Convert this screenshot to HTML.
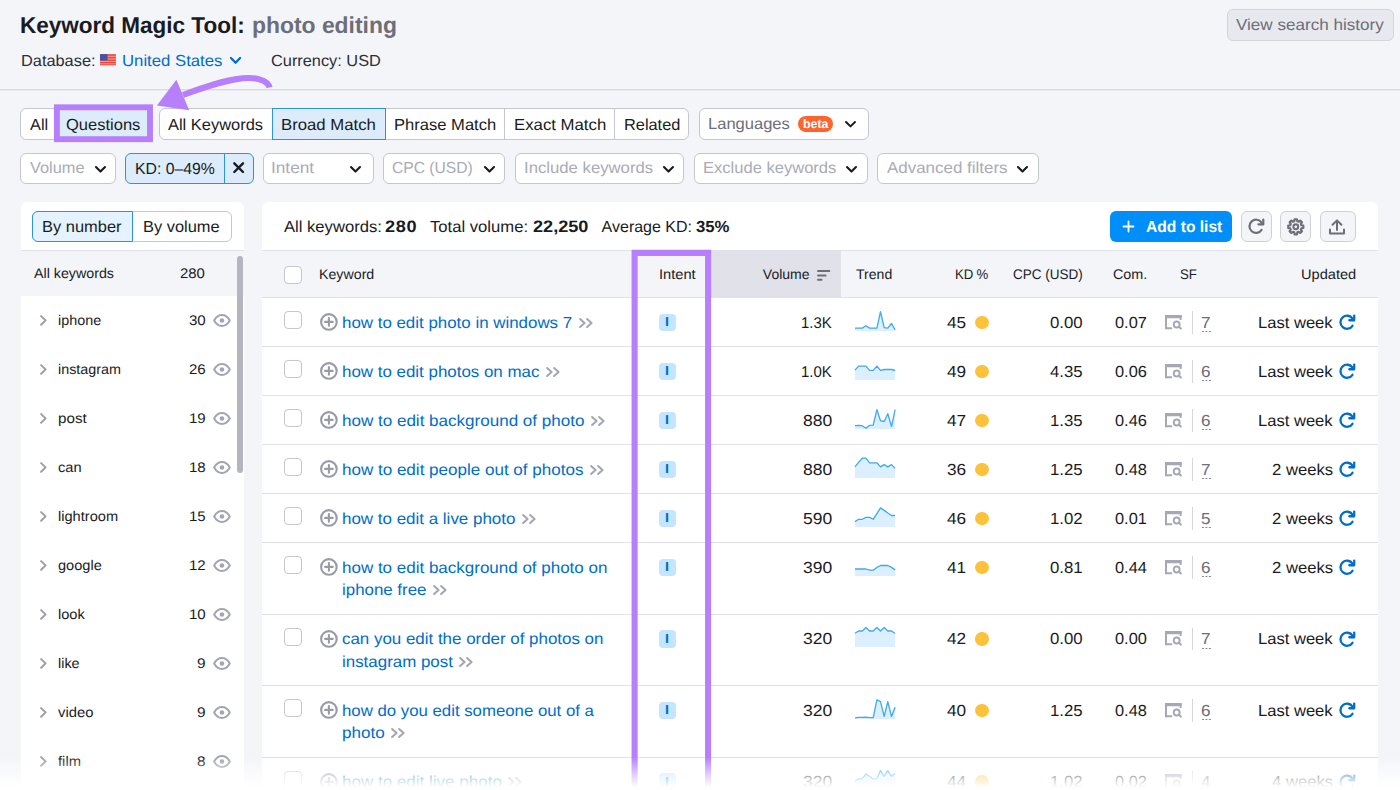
<!DOCTYPE html>
<html lang="en">
<head>
<meta charset="utf-8">
<title>Keyword Magic Tool: photo editing</title>
<style>

*{box-sizing:border-box;margin:0;padding:0}
html,body{width:1400px;height:790px;overflow:hidden;background:#f4f5f9}
body{font-family:"Liberation Sans",sans-serif;color:#191b23;text-rendering:geometricPrecision}
#app{position:relative;width:1400px;height:790px;overflow:hidden;background:#f4f5f9}
.b{position:absolute}
.t{position:absolute;white-space:nowrap;line-height:1;transform-origin:0 0}
svg{position:absolute;overflow:visible}
.pill{background:#fff;border:1px solid #c4c7cf;border-radius:6px}
.panel{background:#fff;border-radius:6px}

</style>
</head>
<body>
<div id="app">
<header>
<span class="t" style="left:20.13px;top:14.00px;font-size:23px;color:#191b23;letter-spacing:0.000px;font-weight:700;transform:scaleX(0.9787);">Keyword Magic Tool:</span>
<span class="t" style="left:251.74px;top:14.00px;font-size:23px;color:#6c6e79;letter-spacing:0.000px;font-weight:700;transform:scaleX(0.9949);">photo editing</span>
<div class="b " style="left:1227px;top:9px;width:167px;height:32px;background:#e8e9ee;border:1px solid #d3d5dc;border-radius:6px"></div>
<span class="t" style="left:1236.12px;top:18.00px;font-size:16px;color:#6c6e79;letter-spacing:0.000px;transform:scaleX(1.0671);">View search history</span>
<span class="t" style="left:20.52px;top:54.00px;font-size:16px;color:#2b2e38;letter-spacing:0.000px;transform:scaleX(1.0217);">Database:</span>
<svg style="left:100.2px;top:54.1px" width="15.9" height="11.5" viewBox="0 0 15.6 11"><rect width="15.6" height="11" fill="#e8473f"/><rect y="1.6" width="15.6" height="1.1" fill="#f59a8c"/><rect y="4.1" width="15.6" height="1.1" fill="#f59a8c"/><rect y="6.6" width="15.6" height="1.1" fill="#f59a8c"/><rect y="9" width="15.6" height="1" fill="#f59a8c"/><rect width="7.4" height="6.2" fill="#4453a5"/></svg>
<span class="t" style="left:122.02px;top:54.00px;font-size:16px;color:#006dca;letter-spacing:0.000px;transform:scaleX(1.0454);">United States</span>
<svg style="left:230px;top:56.5px" width="11.1" height="6.9" viewBox="0 0 11.1 6.9"><path d="M1 1 L5.55 5.7 L10.1 1" fill="none" stroke="#006dca" stroke-width="2.3" stroke-linecap="round" stroke-linejoin="round"/></svg>
<span class="t" style="left:270.62px;top:54.00px;font-size:16px;color:#2b2e38;letter-spacing:0.000px;transform:scaleX(1.0208);">Currency: USD</span>
<div class="b " style="left:0px;top:89px;width:1400px;height:2px;background:linear-gradient(to bottom,#dadce3 0,#dadce3 50%,#e9eaf0 50%,#e9eaf0 100%)"></div>
</header>
<nav>
<div class="b pill" style="left:20.4px;top:108px;width:132px;height:32px;"></div>
<span class="t" style="left:29.82px;top:118.00px;font-size:16px;color:#191b23;letter-spacing:0.000px;transform:scaleX(1.0191);">All</span>
<div class="b " style="left:58px;top:108px;width:91px;height:32px;background:#dcecfb"></div>
<svg style="left:0;top:0" width="200" height="160" viewBox="0 0 200 160"><rect x="56.9" y="107.3" width="93.1" height="31.9" fill="none" stroke="#b77ffb" stroke-width="5.9"/></svg>
<span class="t" style="left:66.12px;top:118.00px;font-size:16px;color:#191b23;letter-spacing:0.000px;transform:scaleX(1.0316);">Questions</span>
<div class="b pill" style="left:159.3px;top:108px;width:530px;height:32px;"></div>
<span class="t" style="left:168.42px;top:118.00px;font-size:16px;color:#191b23;letter-spacing:0.000px;transform:scaleX(1.0274);">All Keywords</span>
<div class="b " style="left:272.3px;top:108px;width:113.4px;height:32px;background:#dcecfb;border:1px solid #2b94e1"></div>
<span class="t" style="left:281.12px;top:118.00px;font-size:16px;color:#191b23;letter-spacing:0.000px;transform:scaleX(1.0452);">Broad Match</span>
<span class="t" style="left:393.72px;top:118.00px;font-size:16px;color:#191b23;letter-spacing:0.000px;transform:scaleX(1.0355);">Phrase Match</span>
<div class="b " style="left:504px;top:109px;width:1px;height:30px;background:#c4c7cf"></div>
<span class="t" style="left:513.92px;top:118.00px;font-size:16px;color:#191b23;letter-spacing:0.000px;transform:scaleX(1.0476);">Exact Match</span>
<div class="b " style="left:614px;top:109px;width:1px;height:30px;background:#c4c7cf"></div>
<span class="t" style="left:623.62px;top:118.00px;font-size:16px;color:#191b23;letter-spacing:0.000px;transform:scaleX(1.0211);">Related</span>
<div class="b pill" style="left:698.6px;top:108px;width:170px;height:32px;"></div>
<span class="t" style="left:707.62px;top:117.00px;font-size:16px;color:#6c6e79;letter-spacing:0.000px;transform:scaleX(1.0332);">Languages</span>
<div class="b " style="left:798.2px;top:116.1px;width:34.5px;height:15.7px;background:#ff642d;border-radius:8px"></div>
<span class="t" style="left:802.51px;top:118.00px;font-size:12.5px;color:#fff;letter-spacing:0.000px;font-weight:700;transform:scaleX(0.9894);">beta</span>
<svg style="left:845px;top:121px" width="11" height="6.6" viewBox="0 0 11 6.6"><path d="M1 1 L5.5 5.3999999999999995 L10 1" fill="none" stroke="#191b23" stroke-width="2" stroke-linecap="round" stroke-linejoin="round"/></svg>
</nav>
<section>
<div class="b pill" style="left:20.4px;top:153px;width:95.9px;height:31px;"></div>
<span class="t" style="left:29.82px;top:161.00px;font-size:16px;color:#a9abb6;letter-spacing:0.000px;transform:scaleX(1.0233);">Volume</span>
<svg style="left:94.6px;top:166px" width="11" height="6.8" viewBox="0 0 11 6.8"><path d="M1 1 L5.5 5.6 L10 1" fill="none" stroke="#191b23" stroke-width="2.1" stroke-linecap="round" stroke-linejoin="round"/></svg>
<div class="b " style="left:125px;top:153px;width:128.5px;height:31px;background:#dcecfb;border:1px solid #2b94e1;border-radius:6px"></div>
<div class="b " style="left:224px;top:154px;width:1px;height:29px;background:#2b94e1"></div>
<span class="t" style="left:134.82px;top:162.00px;font-size:16px;color:#191b23;letter-spacing:0.000px;transform:scaleX(0.9874);">KD: 0–49%</span>
<svg style="left:233px;top:162.4px" width="11.3" height="11.3" viewBox="0 0 11.3 11.3"><path d="M1.3 1.3 L10 10 M10 1.3 L1.3 10" stroke="#191b23" stroke-width="2.4" stroke-linecap="round"/></svg>
<div class="b pill" style="left:262.5px;top:153px;width:111.10000000000002px;height:31px;"></div>
<span class="t" style="left:271.12px;top:161.00px;font-size:16px;color:#a9abb6;letter-spacing:0.000px;transform:scaleX(1.0759);">Intent</span>
<svg style="left:350px;top:166px" width="11" height="6.8" viewBox="0 0 11 6.8"><path d="M1 1 L5.5 5.6 L10 1" fill="none" stroke="#191b23" stroke-width="2.1" stroke-linecap="round" stroke-linejoin="round"/></svg>
<div class="b pill" style="left:383.4px;top:153px;width:122.10000000000002px;height:31px;"></div>
<span class="t" style="left:392.02px;top:161.00px;font-size:16px;color:#a9abb6;letter-spacing:0.000px;transform:scaleX(0.9764);">CPC (USD)</span>
<svg style="left:484px;top:166px" width="11" height="6.8" viewBox="0 0 11 6.8"><path d="M1 1 L5.5 5.6 L10 1" fill="none" stroke="#191b23" stroke-width="2.1" stroke-linecap="round" stroke-linejoin="round"/></svg>
<div class="b pill" style="left:515.2px;top:153px;width:169.29999999999995px;height:31px;"></div>
<span class="t" style="left:523.62px;top:161.00px;font-size:16px;color:#a9abb6;letter-spacing:0.000px;transform:scaleX(1.0444);">Include keywords</span>
<svg style="left:663px;top:166px" width="11" height="6.8" viewBox="0 0 11 6.8"><path d="M1 1 L5.5 5.6 L10 1" fill="none" stroke="#191b23" stroke-width="2.1" stroke-linecap="round" stroke-linejoin="round"/></svg>
<div class="b pill" style="left:694.3px;top:153px;width:173.30000000000007px;height:31px;"></div>
<span class="t" style="left:703.12px;top:161.00px;font-size:16px;color:#a9abb6;letter-spacing:0.000px;transform:scaleX(1.0339);">Exclude keywords</span>
<svg style="left:846.4px;top:166px" width="11" height="6.8" viewBox="0 0 11 6.8"><path d="M1 1 L5.5 5.6 L10 1" fill="none" stroke="#191b23" stroke-width="2.1" stroke-linecap="round" stroke-linejoin="round"/></svg>
<div class="b pill" style="left:877.3px;top:153px;width:162.0px;height:31px;"></div>
<span class="t" style="left:886.92px;top:161.00px;font-size:16px;color:#a9abb6;letter-spacing:0.000px;transform:scaleX(1.0586);">Advanced filters</span>
<svg style="left:1017px;top:166px" width="11" height="6.8" viewBox="0 0 11 6.8"><path d="M1 1 L5.5 5.6 L10 1" fill="none" stroke="#191b23" stroke-width="2.1" stroke-linecap="round" stroke-linejoin="round"/></svg>
</section>
<svg style="left:0;top:0" width="1400" height="160" viewBox="0 0 1400 160"><path d="M269.5 87.5 C268 80 255 77 243 78.3 C225 80 205 87 183 95" fill="none" stroke="#b77ffb" stroke-width="6.1"/><path d="M156.9 105.6 L176.4 79.8 L189.2 110.2 Z" fill="#b77ffb"/></svg>
<aside>
<div class="b panel" style="left:20.5px;top:201.8px;width:223.4px;height:600px;"></div>
<div class="b pill" style="left:32.3px;top:211px;width:199.3px;height:30.6px;"></div>
<div class="b " style="left:32.3px;top:211px;width:100.7px;height:30.6px;background:#e4f3ff;border:1px solid #2b94e1;border-radius:6px 0 0 6px"></div>
<span class="t" style="left:42.42px;top:220.00px;font-size:16px;color:#191b23;letter-spacing:0.000px;transform:scaleX(1.0277);">By number</span>
<span class="t" style="left:143.42px;top:220.00px;font-size:16px;color:#191b23;letter-spacing:0.000px;transform:scaleX(1.0257);">By volume</span>
<div class="b " style="left:20.5px;top:250px;width:223.4px;height:1px;background:#e0e1e9"></div>
<div class="b " style="left:20.5px;top:251px;width:223.4px;height:44.5px;background:#f4f5f9"></div>
<span class="t" style="left:34.33px;top:266.00px;font-size:14px;color:#191b23;letter-spacing:0.000px;transform:scaleX(1.0173);">All keywords</span>
<span class="t" style="left:180.13px;top:266.00px;font-size:14px;color:#191b23;letter-spacing:-0.000px;transform:scaleX(1.0640);">280</span>
<div class="b " style="left:236.7px;top:255.5px;width:6.3px;height:217px;background:#b4b5bd;border-radius:3.2px"></div>
<div role="listitem">
<svg style="left:40.2px;top:314.9px" width="6.9" height="10.8" viewBox="0 0 6.9 10.8"><path d="M1.1 1.1 L5.6 5.4 L1.1 9.7" fill="none" stroke="#9b9eab" stroke-width="2" stroke-linecap="round" stroke-linejoin="round"/></svg>
<span class="t" style="left:58.03px;top:313.00px;font-size:14px;color:#191b23;letter-spacing:0.000px;transform:scaleX(1.0264);">iphone</span>
<span class="t" style="left:189.03px;top:313.00px;font-size:14px;color:#191b23;letter-spacing:-0.000px;transform:scaleX(1.0755);">30</span>
<svg style="left:213.1px;top:313.6px" width="17.9" height="13.1" viewBox="0 0 17.9 13.1"><path d="M1.1 6.55 C3.2 2.9 5.9 1.1 8.95 1.1 C12 1.1 14.7 2.9 16.8 6.55 C14.7 10.2 12 12 8.95 12 C5.9 12 3.2 10.2 1.1 6.55 Z" fill="none" stroke="#a3a6b2" stroke-width="2" stroke-linejoin="round"/><circle cx="8.95" cy="6.55" r="2.3" fill="#a3a6b2"/></svg>
</div>
<div role="listitem">
<svg style="left:40.2px;top:363.9px" width="6.9" height="10.8" viewBox="0 0 6.9 10.8"><path d="M1.1 1.1 L5.6 5.4 L1.1 9.7" fill="none" stroke="#9b9eab" stroke-width="2" stroke-linecap="round" stroke-linejoin="round"/></svg>
<span class="t" style="left:58.03px;top:362.00px;font-size:14px;color:#191b23;letter-spacing:0.000px;transform:scaleX(1.0258);">instagram</span>
<span class="t" style="left:189.03px;top:362.00px;font-size:14px;color:#191b23;letter-spacing:-0.000px;transform:scaleX(1.0755);">26</span>
<svg style="left:213.1px;top:362.6px" width="17.9" height="13.1" viewBox="0 0 17.9 13.1"><path d="M1.1 6.55 C3.2 2.9 5.9 1.1 8.95 1.1 C12 1.1 14.7 2.9 16.8 6.55 C14.7 10.2 12 12 8.95 12 C5.9 12 3.2 10.2 1.1 6.55 Z" fill="none" stroke="#a3a6b2" stroke-width="2" stroke-linejoin="round"/><circle cx="8.95" cy="6.55" r="2.3" fill="#a3a6b2"/></svg>
</div>
<div role="listitem">
<svg style="left:40.2px;top:412.9px" width="6.9" height="10.8" viewBox="0 0 6.9 10.8"><path d="M1.1 1.1 L5.6 5.4 L1.1 9.7" fill="none" stroke="#9b9eab" stroke-width="2" stroke-linecap="round" stroke-linejoin="round"/></svg>
<span class="t" style="left:58.03px;top:411.00px;font-size:14px;color:#191b23;letter-spacing:0.000px;transform:scaleX(1.0864);">post</span>
<span class="t" style="left:189.03px;top:411.00px;font-size:14px;color:#191b23;letter-spacing:-0.000px;transform:scaleX(1.0755);">19</span>
<svg style="left:213.1px;top:411.6px" width="17.9" height="13.1" viewBox="0 0 17.9 13.1"><path d="M1.1 6.55 C3.2 2.9 5.9 1.1 8.95 1.1 C12 1.1 14.7 2.9 16.8 6.55 C14.7 10.2 12 12 8.95 12 C5.9 12 3.2 10.2 1.1 6.55 Z" fill="none" stroke="#a3a6b2" stroke-width="2" stroke-linejoin="round"/><circle cx="8.95" cy="6.55" r="2.3" fill="#a3a6b2"/></svg>
</div>
<div role="listitem">
<svg style="left:40.2px;top:461.9px" width="6.9" height="10.8" viewBox="0 0 6.9 10.8"><path d="M1.1 1.1 L5.6 5.4 L1.1 9.7" fill="none" stroke="#9b9eab" stroke-width="2" stroke-linecap="round" stroke-linejoin="round"/></svg>
<span class="t" style="left:58.03px;top:460.00px;font-size:14px;color:#191b23;letter-spacing:0.000px;transform:scaleX(1.0433);">can</span>
<span class="t" style="left:189.03px;top:460.00px;font-size:14px;color:#191b23;letter-spacing:-0.000px;transform:scaleX(1.0755);">18</span>
<svg style="left:213.1px;top:460.6px" width="17.9" height="13.1" viewBox="0 0 17.9 13.1"><path d="M1.1 6.55 C3.2 2.9 5.9 1.1 8.95 1.1 C12 1.1 14.7 2.9 16.8 6.55 C14.7 10.2 12 12 8.95 12 C5.9 12 3.2 10.2 1.1 6.55 Z" fill="none" stroke="#a3a6b2" stroke-width="2" stroke-linejoin="round"/><circle cx="8.95" cy="6.55" r="2.3" fill="#a3a6b2"/></svg>
</div>
<div role="listitem">
<svg style="left:40.2px;top:510.9px" width="6.9" height="10.8" viewBox="0 0 6.9 10.8"><path d="M1.1 1.1 L5.6 5.4 L1.1 9.7" fill="none" stroke="#9b9eab" stroke-width="2" stroke-linecap="round" stroke-linejoin="round"/></svg>
<span class="t" style="left:58.03px;top:509.00px;font-size:14px;color:#191b23;letter-spacing:0.000px;transform:scaleX(1.0427);">lightroom</span>
<span class="t" style="left:189.03px;top:509.00px;font-size:14px;color:#191b23;letter-spacing:-0.000px;transform:scaleX(1.0755);">15</span>
<svg style="left:213.1px;top:509.6px" width="17.9" height="13.1" viewBox="0 0 17.9 13.1"><path d="M1.1 6.55 C3.2 2.9 5.9 1.1 8.95 1.1 C12 1.1 14.7 2.9 16.8 6.55 C14.7 10.2 12 12 8.95 12 C5.9 12 3.2 10.2 1.1 6.55 Z" fill="none" stroke="#a3a6b2" stroke-width="2" stroke-linejoin="round"/><circle cx="8.95" cy="6.55" r="2.3" fill="#a3a6b2"/></svg>
</div>
<div role="listitem">
<svg style="left:40.2px;top:559.9px" width="6.9" height="10.8" viewBox="0 0 6.9 10.8"><path d="M1.1 1.1 L5.6 5.4 L1.1 9.7" fill="none" stroke="#9b9eab" stroke-width="2" stroke-linecap="round" stroke-linejoin="round"/></svg>
<span class="t" style="left:58.03px;top:558.00px;font-size:14px;color:#191b23;letter-spacing:0.000px;transform:scaleX(1.0430);">google</span>
<span class="t" style="left:189.03px;top:558.00px;font-size:14px;color:#191b23;letter-spacing:-0.000px;transform:scaleX(1.0755);">12</span>
<svg style="left:213.1px;top:558.6px" width="17.9" height="13.1" viewBox="0 0 17.9 13.1"><path d="M1.1 6.55 C3.2 2.9 5.9 1.1 8.95 1.1 C12 1.1 14.7 2.9 16.8 6.55 C14.7 10.2 12 12 8.95 12 C5.9 12 3.2 10.2 1.1 6.55 Z" fill="none" stroke="#a3a6b2" stroke-width="2" stroke-linejoin="round"/><circle cx="8.95" cy="6.55" r="2.3" fill="#a3a6b2"/></svg>
</div>
<div role="listitem">
<svg style="left:40.2px;top:608.9px" width="6.9" height="10.8" viewBox="0 0 6.9 10.8"><path d="M1.1 1.1 L5.6 5.4 L1.1 9.7" fill="none" stroke="#9b9eab" stroke-width="2" stroke-linecap="round" stroke-linejoin="round"/></svg>
<span class="t" style="left:58.03px;top:607.00px;font-size:14px;color:#191b23;letter-spacing:-0.000px;transform:scaleX(1.0416);">look</span>
<span class="t" style="left:189.03px;top:607.00px;font-size:14px;color:#191b23;letter-spacing:-0.000px;transform:scaleX(1.0755);">10</span>
<svg style="left:213.1px;top:607.6px" width="17.9" height="13.1" viewBox="0 0 17.9 13.1"><path d="M1.1 6.55 C3.2 2.9 5.9 1.1 8.95 1.1 C12 1.1 14.7 2.9 16.8 6.55 C14.7 10.2 12 12 8.95 12 C5.9 12 3.2 10.2 1.1 6.55 Z" fill="none" stroke="#a3a6b2" stroke-width="2" stroke-linejoin="round"/><circle cx="8.95" cy="6.55" r="2.3" fill="#a3a6b2"/></svg>
</div>
<div role="listitem">
<svg style="left:40.2px;top:657.9px" width="6.9" height="10.8" viewBox="0 0 6.9 10.8"><path d="M1.1 1.1 L5.6 5.4 L1.1 9.7" fill="none" stroke="#9b9eab" stroke-width="2" stroke-linecap="round" stroke-linejoin="round"/></svg>
<span class="t" style="left:58.03px;top:656.00px;font-size:14px;color:#191b23;letter-spacing:0.000px;transform:scaleX(1.0257);">like</span>
<span class="t" style="left:196.83px;top:656.00px;font-size:14px;color:#191b23;letter-spacing:0.344px;transform:scaleX(1.1000);">9</span>
<svg style="left:213.1px;top:656.6px" width="17.9" height="13.1" viewBox="0 0 17.9 13.1"><path d="M1.1 6.55 C3.2 2.9 5.9 1.1 8.95 1.1 C12 1.1 14.7 2.9 16.8 6.55 C14.7 10.2 12 12 8.95 12 C5.9 12 3.2 10.2 1.1 6.55 Z" fill="none" stroke="#a3a6b2" stroke-width="2" stroke-linejoin="round"/><circle cx="8.95" cy="6.55" r="2.3" fill="#a3a6b2"/></svg>
</div>
<div role="listitem">
<svg style="left:40.2px;top:706.9px" width="6.9" height="10.8" viewBox="0 0 6.9 10.8"><path d="M1.1 1.1 L5.6 5.4 L1.1 9.7" fill="none" stroke="#9b9eab" stroke-width="2" stroke-linecap="round" stroke-linejoin="round"/></svg>
<span class="t" style="left:58.03px;top:705.00px;font-size:14px;color:#191b23;letter-spacing:0.000px;transform:scaleX(1.0564);">video</span>
<span class="t" style="left:196.83px;top:705.00px;font-size:14px;color:#191b23;letter-spacing:0.344px;transform:scaleX(1.1000);">9</span>
<svg style="left:213.1px;top:705.6px" width="17.9" height="13.1" viewBox="0 0 17.9 13.1"><path d="M1.1 6.55 C3.2 2.9 5.9 1.1 8.95 1.1 C12 1.1 14.7 2.9 16.8 6.55 C14.7 10.2 12 12 8.95 12 C5.9 12 3.2 10.2 1.1 6.55 Z" fill="none" stroke="#a3a6b2" stroke-width="2" stroke-linejoin="round"/><circle cx="8.95" cy="6.55" r="2.3" fill="#a3a6b2"/></svg>
</div>
<div role="listitem">
<svg style="left:40.2px;top:755.9px" width="6.9" height="10.8" viewBox="0 0 6.9 10.8"><path d="M1.1 1.1 L5.6 5.4 L1.1 9.7" fill="none" stroke="#9b9eab" stroke-width="2" stroke-linecap="round" stroke-linejoin="round"/></svg>
<span class="t" style="left:58.03px;top:754.00px;font-size:14px;color:#191b23;letter-spacing:0.000px;transform:scaleX(1.0539);">film</span>
<span class="t" style="left:196.83px;top:754.00px;font-size:14px;color:#191b23;letter-spacing:0.344px;transform:scaleX(1.1000);">8</span>
<svg style="left:213.1px;top:754.6px" width="17.9" height="13.1" viewBox="0 0 17.9 13.1"><path d="M1.1 6.55 C3.2 2.9 5.9 1.1 8.95 1.1 C12 1.1 14.7 2.9 16.8 6.55 C14.7 10.2 12 12 8.95 12 C5.9 12 3.2 10.2 1.1 6.55 Z" fill="none" stroke="#a3a6b2" stroke-width="2" stroke-linejoin="round"/><circle cx="8.95" cy="6.55" r="2.3" fill="#a3a6b2"/></svg>
</div>
</aside>
<main>
<div class="b panel" style="left:261.8px;top:201.8px;width:1116.4px;height:600px;"></div>
<span class="t" style="left:283.62px;top:220.00px;font-size:16px;color:#191b23;letter-spacing:0.000px;transform:scaleX(1.0379);">All keywords:</span>
<span class="t" style="left:385.39px;top:219.00px;font-size:16.5px;color:#191b23;letter-spacing:0.580px;font-weight:700;transform:scaleX(1.1000);">280</span>
<span class="t" style="left:430.42px;top:220.00px;font-size:16px;color:#191b23;letter-spacing:0.000px;transform:scaleX(1.0398);">Total volume:</span>
<span class="t" style="left:532.69px;top:219.00px;font-size:16.5px;color:#191b23;letter-spacing:0.000px;font-weight:700;transform:scaleX(1.0989);">22,250</span>
<span class="t" style="left:601.62px;top:220.00px;font-size:16px;color:#191b23;letter-spacing:-0.000px;">Average KD:</span>
<span class="t" style="left:695.92px;top:220.00px;font-size:16px;color:#191b23;letter-spacing:0.000px;font-weight:700;transform:scaleX(1.0465);">35%</span>
<div class="b " style="left:1110px;top:211px;width:122px;height:30.8px;background:#008ff8;border-radius:6px"></div>
<svg style="left:1123px;top:221px" width="11" height="11" viewBox="0 0 11 11"><path d="M5.5 0.5 V10.5 M0.5 5.5 H10.5" stroke="#fff" stroke-width="1.8" stroke-linecap="round"/></svg>
<span class="t" style="left:1146.12px;top:220.00px;font-size:16px;color:#fff;letter-spacing:0.000px;font-weight:700;transform:scaleX(0.9757);">Add to list</span>
<div class="b " style="left:1241px;top:211px;width:30.6px;height:30.8px;background:#f4f5f9;border:1px solid #cfd1d9;border-radius:6px"></div>
<div class="b " style="left:1280.4px;top:211px;width:30.4px;height:30.8px;background:#f4f5f9;border:1px solid #cfd1d9;border-radius:6px"></div>
<div class="b " style="left:1320px;top:211px;width:35.6px;height:30.8px;background:#f4f5f9;border:1px solid #cfd1d9;border-radius:6px"></div>
<svg style="left:1248px;top:218.2px" width="16.4" height="16.4" viewBox="0 0 16.4 16.4"><path d="M13.6 11.9 A6.6 6.6 0 1 1 13.6 4.7 L14.6 6.1" fill="none" stroke="#6c6e79" stroke-width="2.2" stroke-linecap="round" stroke-linejoin="round"/><path d="M15.3 1.6 V6.3 H10.4" fill="none" stroke="#6c6e79" stroke-width="2.2" stroke-linecap="round" stroke-linejoin="round"/></svg>
<svg style="left:1286.8px;top:217.6px" width="17.6" height="17.6" viewBox="0 0 24 24"><path d="M10.34 1.73 L13.66 1.73 L14.11 4.39 L15.89 5.13 L18.09 3.57 L20.43 5.91 L18.87 8.11 L19.61 9.89 L22.27 10.34 L22.27 13.66 L19.61 14.11 L18.87 15.89 L20.43 18.09 L18.09 20.43 L15.89 18.87 L14.11 19.61 L13.66 22.27 L10.34 22.27 L9.89 19.61 L8.11 18.87 L5.91 20.43 L3.57 18.09 L5.13 15.89 L4.39 14.11 L1.73 13.66 L1.73 10.34 L4.39 9.89 L5.13 8.11 L3.57 5.91 L5.91 3.57 L8.11 5.13 L9.89 4.39 Z" fill="none" stroke="#6c6e79" stroke-width="3" stroke-linejoin="round"/><circle cx="12" cy="12" r="3.3" fill="none" stroke="#6c6e79" stroke-width="2.8"/></svg>
<svg style="left:1329px;top:218.6px" width="16" height="16" viewBox="0 0 16 16"><path d="M1 10.5 V14.6 H15 V10.5" fill="none" stroke="#6c6e79" stroke-width="2" stroke-linejoin="round" stroke-linecap="round"/><path d="M8 11 V2.4" stroke="#6c6e79" stroke-width="2" stroke-linecap="round"/><path d="M3.6 5.8 L8 1.4 L12.4 5.8" fill="none" stroke="#6c6e79" stroke-width="2" stroke-linecap="round" stroke-linejoin="round"/></svg>
<div class="b " style="left:261.8px;top:250px;width:1116.4px;height:1px;background:#e0e1e9"></div>
<div class="b " style="left:261.8px;top:251px;width:1116.4px;height:46px;background:#f4f5f9"></div>
<div class="b " style="left:711px;top:251px;width:130px;height:46px;background:#e0e1e9"></div>
<div class="b " style="left:261.8px;top:297px;width:1116.4px;height:1px;background:#e0e1e9"></div>
<div class="b " style="left:284.2px;top:266.3px;width:17.6px;height:18px;background:#fff;border:1px solid #c4c7cf;border-radius:4px"></div>
<span class="t" style="left:319.43px;top:267.00px;font-size:14px;color:#191b23;letter-spacing:0.000px;transform:scaleX(1.0144);">Keyword</span>
<span class="t" style="left:659.23px;top:267.00px;font-size:14px;color:#191b23;letter-spacing:0.000px;transform:scaleX(1.0464);">Intent</span>
<span class="t" style="left:762.83px;top:267.00px;font-size:14px;color:#191b23;letter-spacing:0.000px;">Volume</span>
<svg style="left:816.7px;top:269.7px" width="13.3" height="10.8" viewBox="0 0 13.3 10.8"><path d="M1 1 H12.3 M1 5.4 H8.6 M1 9.8 H4.6" stroke="#6c6e79" stroke-width="2" stroke-linecap="round"/></svg>
<span class="t" style="left:856.43px;top:267.00px;font-size:14px;color:#191b23;letter-spacing:0.000px;transform:scaleX(1.0053);">Trend</span>
<span class="t" style="left:954.83px;top:267.00px;font-size:14px;color:#191b23;letter-spacing:-0.140px;transform:scaleX(0.9400);">KD %</span>
<span class="t" style="left:1013.13px;top:267.00px;font-size:14px;color:#191b23;letter-spacing:0.000px;transform:scaleX(0.9656);">CPC (USD)</span>
<span class="t" style="left:1113.13px;top:267.00px;font-size:14px;color:#191b23;letter-spacing:0.000px;transform:scaleX(1.0240);">Com.</span>
<span class="t" style="left:1179.98px;top:267.00px;font-size:14px;color:#191b23;letter-spacing:0.000px;transform:scaleX(0.9449);">SF</span>
<span class="t" style="left:1300.53px;top:267.00px;font-size:14px;color:#191b23;letter-spacing:0.000px;transform:scaleX(1.0438);">Updated</span>
<div role="row">
<div class="b " style="left:284.2px;top:311.1px;width:17.6px;height:18px;background:#fff;border:1px solid #c4c7cf;border-radius:4px"></div>
<svg style="left:319.9px;top:313.0px" width="17.8" height="17.8" viewBox="0 0 17.8 17.8"><circle cx="8.9" cy="8.9" r="7.8" fill="none" stroke="#989aa6" stroke-width="2.1"/><path d="M8.9 5.1 V12.7 M5.1 8.9 H12.7" stroke="#989aa6" stroke-width="2.1" stroke-linecap="round"/></svg>
<span class="t" style="left:341.52px;top:316.00px;font-size:16px;color:#006dca;letter-spacing:0.000px;transform:scaleX(1.0560);">how to edit photo in windows 7</span>
<svg style="left:578.6px;top:317.6px" width="13.7" height="10" viewBox="0 0 13.7 10"><path d="M1.1 1 L5.6 5 L1.1 9 M8.1 1 L12.6 5 L8.1 9" fill="none" stroke="#a3a6b2" stroke-width="2" stroke-linecap="round" stroke-linejoin="round"/></svg>
<div class="b " style="left:658.5px;top:313.8px;width:17.5px;height:17.3px;background:#c4e5fe;border-radius:4px"></div>
<span class="t" style="left:664.68px;top:315.00px;font-size:13px;color:#006dca;letter-spacing:0.714px;font-weight:700;transform:scaleX(1.1000);">I</span>
<span class="t" style="left:801.15px;top:316.00px;font-size:15.5px;color:#191b23;letter-spacing:0.000px;transform:scaleX(0.9620);">1.3K</span>
<svg style="left:854.8px;top:297.5px" width="40.1" height="34" viewBox="0 0 40.1 34"><path d="M0.0 30.1 L3.6 30.1 L7.3 30.1 L10.9 27.8 L14.6 30.1 L18.2 30.1 L21.9 30.1 L25.5 13.6 L29.2 29.7 L32.8 30.1 L36.5 25.5 L40.1 31.9 L40.1 33 L0 33 Z" fill="#dbeffe"/><path d="M0.0 30.1 L3.6 30.1 L7.3 30.1 L10.9 27.8 L14.6 30.1 L18.2 30.1 L21.9 30.1 L25.5 13.6 L29.2 29.7 L32.8 30.1 L36.5 25.5 L40.1 31.9" fill="none" stroke="#3fa9f0" stroke-width="1.3" stroke-linejoin="round"/></svg>
<span class="t" style="left:946.62px;top:316.00px;font-size:16px;color:#191b23;letter-spacing:0.000px;transform:scaleX(1.0743);">45</span>
<div class="b " style="left:975.4px;top:315.7px;width:13.4px;height:13.4px;background:#fdc23c;border-radius:50%"></div>
<span class="t" style="left:1050.12px;top:316.00px;font-size:16px;color:#191b23;letter-spacing:0.000px;transform:scaleX(1.0475);">0.00</span>
<span class="t" style="left:1114.62px;top:316.00px;font-size:16px;color:#191b23;letter-spacing:0.000px;transform:scaleX(1.0218);">0.07</span>
<svg style="left:1165.2px;top:314.6px" width="16.8" height="14.4" viewBox="0 0 16.8 14.4"><g fill="#a6a8b5"><rect x="0" y="0" width="16.6" height="3.2" rx="0.6"/><rect x="0" y="0" width="2" height="14.2" rx="0.6"/><rect x="14.7" y="0" width="1.9" height="5"/><rect x="0" y="12.3" width="7.2" height="1.9" rx="0.6"/></g><circle cx="11.7" cy="9.5" r="2.95" fill="none" stroke="#a6a8b5" stroke-width="1.9"/><path d="M13.9 11.7 L15.9 13.6" stroke="#a6a8b5" stroke-width="2" stroke-linecap="round"/></svg>
<div class="b " style="left:1192px;top:311.2px;width:1px;height:22.4px;background:#d5d7de"></div>
<span class="t" style="left:1201.32px;top:316.00px;font-size:16px;color:#6c6e79;letter-spacing:0.000px;transform:scaleX(1.0689);">7</span>
<svg style="left:1201.6px;top:331.1px" width="9" height="1" viewBox="0 0 9 1"><path d="M0 0.5 H2 M3.4 0.5 H5.4 M6.8 0.5 H9" stroke="#8a8d99" stroke-width="1"/></svg>
<span class="t" style="left:1258.12px;top:316.00px;font-size:16px;color:#191b23;letter-spacing:0.000px;transform:scaleX(1.0357);">Last week</span>
<svg style="left:1338.7px;top:314.3px" width="16.3" height="16.3" viewBox="0 0 16.4 16.4"><path d="M13.6 11.9 A6.6 6.6 0 1 1 13.6 4.7 L14.6 6.1" fill="none" stroke="#006dca" stroke-width="2.3" stroke-linecap="round" stroke-linejoin="round"/><path d="M15.3 1.6 V6.3 H10.4" fill="none" stroke="#006dca" stroke-width="2.3" stroke-linecap="round" stroke-linejoin="round"/></svg>
<div class="b " style="left:261.8px;top:346.0px;width:1116.4px;height:1px;background:#e0e1e9"></div>
</div>
<div role="row">
<div class="b " style="left:284.2px;top:360.1px;width:17.6px;height:18px;background:#fff;border:1px solid #c4c7cf;border-radius:4px"></div>
<svg style="left:319.9px;top:362.0px" width="17.8" height="17.8" viewBox="0 0 17.8 17.8"><circle cx="8.9" cy="8.9" r="7.8" fill="none" stroke="#989aa6" stroke-width="2.1"/><path d="M8.9 5.1 V12.7 M5.1 8.9 H12.7" stroke="#989aa6" stroke-width="2.1" stroke-linecap="round"/></svg>
<span class="t" style="left:341.52px;top:365.00px;font-size:16px;color:#006dca;letter-spacing:0.000px;transform:scaleX(1.0570);">how to edit photos on mac</span>
<svg style="left:545.9px;top:366.6px" width="13.7" height="10" viewBox="0 0 13.7 10"><path d="M1.1 1 L5.6 5 L1.1 9 M8.1 1 L12.6 5 L8.1 9" fill="none" stroke="#a3a6b2" stroke-width="2" stroke-linecap="round" stroke-linejoin="round"/></svg>
<div class="b " style="left:658.5px;top:362.8px;width:17.5px;height:17.3px;background:#c4e5fe;border-radius:4px"></div>
<span class="t" style="left:664.68px;top:364.00px;font-size:13px;color:#006dca;letter-spacing:0.714px;font-weight:700;transform:scaleX(1.1000);">I</span>
<span class="t" style="left:801.15px;top:365.00px;font-size:15.5px;color:#191b23;letter-spacing:0.000px;transform:scaleX(0.9620);">1.0K</span>
<svg style="left:854.8px;top:346.5px" width="40.1" height="34" viewBox="0 0 40.1 34"><path d="M0.0 23.1 L3.6 19.1 L7.3 19.1 L10.9 19.1 L14.6 23.4 L18.2 23.4 L21.9 19.3 L25.5 23.4 L29.2 22.5 L32.8 22.5 L36.5 22.5 L40.1 23.5 L40.1 33 L0 33 Z" fill="#dbeffe"/><path d="M0.0 23.1 L3.6 19.1 L7.3 19.1 L10.9 19.1 L14.6 23.4 L18.2 23.4 L21.9 19.3 L25.5 23.4 L29.2 22.5 L32.8 22.5 L36.5 22.5 L40.1 23.5" fill="none" stroke="#3fa9f0" stroke-width="1.3" stroke-linejoin="round"/></svg>
<span class="t" style="left:946.62px;top:365.00px;font-size:16px;color:#191b23;letter-spacing:0.000px;transform:scaleX(1.0743);">49</span>
<div class="b " style="left:975.4px;top:364.7px;width:13.4px;height:13.4px;background:#fdc23c;border-radius:50%"></div>
<span class="t" style="left:1050.12px;top:365.00px;font-size:16px;color:#191b23;letter-spacing:0.000px;transform:scaleX(1.0475);">4.35</span>
<span class="t" style="left:1114.62px;top:365.00px;font-size:16px;color:#191b23;letter-spacing:0.000px;transform:scaleX(1.0218);">0.06</span>
<svg style="left:1165.2px;top:363.6px" width="16.8" height="14.4" viewBox="0 0 16.8 14.4"><g fill="#a6a8b5"><rect x="0" y="0" width="16.6" height="3.2" rx="0.6"/><rect x="0" y="0" width="2" height="14.2" rx="0.6"/><rect x="14.7" y="0" width="1.9" height="5"/><rect x="0" y="12.3" width="7.2" height="1.9" rx="0.6"/></g><circle cx="11.7" cy="9.5" r="2.95" fill="none" stroke="#a6a8b5" stroke-width="1.9"/><path d="M13.9 11.7 L15.9 13.6" stroke="#a6a8b5" stroke-width="2" stroke-linecap="round"/></svg>
<div class="b " style="left:1192px;top:360.2px;width:1px;height:22.4px;background:#d5d7de"></div>
<span class="t" style="left:1201.32px;top:365.00px;font-size:16px;color:#6c6e79;letter-spacing:0.000px;transform:scaleX(1.0689);">6</span>
<svg style="left:1201.6px;top:380.1px" width="9" height="1" viewBox="0 0 9 1"><path d="M0 0.5 H2 M3.4 0.5 H5.4 M6.8 0.5 H9" stroke="#8a8d99" stroke-width="1"/></svg>
<span class="t" style="left:1258.12px;top:365.00px;font-size:16px;color:#191b23;letter-spacing:0.000px;transform:scaleX(1.0357);">Last week</span>
<svg style="left:1338.7px;top:363.3px" width="16.3" height="16.3" viewBox="0 0 16.4 16.4"><path d="M13.6 11.9 A6.6 6.6 0 1 1 13.6 4.7 L14.6 6.1" fill="none" stroke="#006dca" stroke-width="2.3" stroke-linecap="round" stroke-linejoin="round"/><path d="M15.3 1.6 V6.3 H10.4" fill="none" stroke="#006dca" stroke-width="2.3" stroke-linecap="round" stroke-linejoin="round"/></svg>
<div class="b " style="left:261.8px;top:395.0px;width:1116.4px;height:1px;background:#e0e1e9"></div>
</div>
<div role="row">
<div class="b " style="left:284.2px;top:409.1px;width:17.6px;height:18px;background:#fff;border:1px solid #c4c7cf;border-radius:4px"></div>
<svg style="left:319.9px;top:411.0px" width="17.8" height="17.8" viewBox="0 0 17.8 17.8"><circle cx="8.9" cy="8.9" r="7.8" fill="none" stroke="#989aa6" stroke-width="2.1"/><path d="M8.9 5.1 V12.7 M5.1 8.9 H12.7" stroke="#989aa6" stroke-width="2.1" stroke-linecap="round"/></svg>
<span class="t" style="left:341.52px;top:414.00px;font-size:16px;color:#006dca;letter-spacing:0.000px;transform:scaleX(1.0646);">how to edit background of photo</span>
<svg style="left:590.9px;top:415.6px" width="13.7" height="10" viewBox="0 0 13.7 10"><path d="M1.1 1 L5.6 5 L1.1 9 M8.1 1 L12.6 5 L8.1 9" fill="none" stroke="#a3a6b2" stroke-width="2" stroke-linecap="round" stroke-linejoin="round"/></svg>
<div class="b " style="left:658.5px;top:411.8px;width:17.5px;height:17.3px;background:#c4e5fe;border-radius:4px"></div>
<span class="t" style="left:664.68px;top:413.00px;font-size:13px;color:#006dca;letter-spacing:0.714px;font-weight:700;transform:scaleX(1.1000);">I</span>
<span class="t" style="left:802.62px;top:414.00px;font-size:16px;color:#191b23;letter-spacing:0.000px;transform:scaleX(1.0943);">880</span>
<svg style="left:854.8px;top:395.5px" width="40.1" height="34" viewBox="0 0 40.1 34"><path d="M0.0 29.7 L3.6 29.3 L7.3 29.7 L10.9 32.2 L14.6 29.3 L18.2 29.1 L21.9 13.6 L25.5 24.7 L29.2 25.5 L32.8 17.7 L36.5 30.6 L40.1 13.6 L40.1 33 L0 33 Z" fill="#dbeffe"/><path d="M0.0 29.7 L3.6 29.3 L7.3 29.7 L10.9 32.2 L14.6 29.3 L18.2 29.1 L21.9 13.6 L25.5 24.7 L29.2 25.5 L32.8 17.7 L36.5 30.6 L40.1 13.6" fill="none" stroke="#3fa9f0" stroke-width="1.3" stroke-linejoin="round"/></svg>
<span class="t" style="left:946.62px;top:414.00px;font-size:16px;color:#191b23;letter-spacing:0.000px;transform:scaleX(1.0743);">47</span>
<div class="b " style="left:975.4px;top:413.7px;width:13.4px;height:13.4px;background:#fdc23c;border-radius:50%"></div>
<span class="t" style="left:1050.12px;top:414.00px;font-size:16px;color:#191b23;letter-spacing:0.000px;transform:scaleX(1.0475);">1.35</span>
<span class="t" style="left:1114.62px;top:414.00px;font-size:16px;color:#191b23;letter-spacing:0.000px;transform:scaleX(1.0218);">0.46</span>
<svg style="left:1165.2px;top:412.6px" width="16.8" height="14.4" viewBox="0 0 16.8 14.4"><g fill="#a6a8b5"><rect x="0" y="0" width="16.6" height="3.2" rx="0.6"/><rect x="0" y="0" width="2" height="14.2" rx="0.6"/><rect x="14.7" y="0" width="1.9" height="5"/><rect x="0" y="12.3" width="7.2" height="1.9" rx="0.6"/></g><circle cx="11.7" cy="9.5" r="2.95" fill="none" stroke="#a6a8b5" stroke-width="1.9"/><path d="M13.9 11.7 L15.9 13.6" stroke="#a6a8b5" stroke-width="2" stroke-linecap="round"/></svg>
<div class="b " style="left:1192px;top:409.2px;width:1px;height:22.4px;background:#d5d7de"></div>
<span class="t" style="left:1201.32px;top:414.00px;font-size:16px;color:#6c6e79;letter-spacing:0.000px;transform:scaleX(1.0689);">6</span>
<svg style="left:1201.6px;top:429.1px" width="9" height="1" viewBox="0 0 9 1"><path d="M0 0.5 H2 M3.4 0.5 H5.4 M6.8 0.5 H9" stroke="#8a8d99" stroke-width="1"/></svg>
<span class="t" style="left:1258.12px;top:414.00px;font-size:16px;color:#191b23;letter-spacing:0.000px;transform:scaleX(1.0357);">Last week</span>
<svg style="left:1338.7px;top:412.3px" width="16.3" height="16.3" viewBox="0 0 16.4 16.4"><path d="M13.6 11.9 A6.6 6.6 0 1 1 13.6 4.7 L14.6 6.1" fill="none" stroke="#006dca" stroke-width="2.3" stroke-linecap="round" stroke-linejoin="round"/><path d="M15.3 1.6 V6.3 H10.4" fill="none" stroke="#006dca" stroke-width="2.3" stroke-linecap="round" stroke-linejoin="round"/></svg>
<div class="b " style="left:261.8px;top:444.0px;width:1116.4px;height:1px;background:#e0e1e9"></div>
</div>
<div role="row">
<div class="b " style="left:284.2px;top:458.1px;width:17.6px;height:18px;background:#fff;border:1px solid #c4c7cf;border-radius:4px"></div>
<svg style="left:319.9px;top:460.0px" width="17.8" height="17.8" viewBox="0 0 17.8 17.8"><circle cx="8.9" cy="8.9" r="7.8" fill="none" stroke="#989aa6" stroke-width="2.1"/><path d="M8.9 5.1 V12.7 M5.1 8.9 H12.7" stroke="#989aa6" stroke-width="2.1" stroke-linecap="round"/></svg>
<span class="t" style="left:341.52px;top:463.00px;font-size:16px;color:#006dca;letter-spacing:-0.000px;transform:scaleX(1.0643);">how to edit people out of photos</span>
<svg style="left:589.9px;top:464.6px" width="13.7" height="10" viewBox="0 0 13.7 10"><path d="M1.1 1 L5.6 5 L1.1 9 M8.1 1 L12.6 5 L8.1 9" fill="none" stroke="#a3a6b2" stroke-width="2" stroke-linecap="round" stroke-linejoin="round"/></svg>
<div class="b " style="left:658.5px;top:460.8px;width:17.5px;height:17.3px;background:#c4e5fe;border-radius:4px"></div>
<span class="t" style="left:664.68px;top:462.00px;font-size:13px;color:#006dca;letter-spacing:0.714px;font-weight:700;transform:scaleX(1.1000);">I</span>
<span class="t" style="left:802.62px;top:463.00px;font-size:16px;color:#191b23;letter-spacing:0.000px;transform:scaleX(1.0943);">880</span>
<svg style="left:854.8px;top:444.5px" width="40.1" height="34" viewBox="0 0 40.1 34"><path d="M0.0 21.9 L3.6 17.4 L7.3 13.2 L10.9 13.2 L14.6 17.8 L18.2 17.8 L21.9 17.8 L25.5 21.9 L29.2 19.6 L32.8 21.9 L36.5 19.6 L40.1 23.4 L40.1 33 L0 33 Z" fill="#dbeffe"/><path d="M0.0 21.9 L3.6 17.4 L7.3 13.2 L10.9 13.2 L14.6 17.8 L18.2 17.8 L21.9 17.8 L25.5 21.9 L29.2 19.6 L32.8 21.9 L36.5 19.6 L40.1 23.4" fill="none" stroke="#3fa9f0" stroke-width="1.3" stroke-linejoin="round"/></svg>
<span class="t" style="left:946.62px;top:463.00px;font-size:16px;color:#191b23;letter-spacing:0.000px;transform:scaleX(1.0743);">36</span>
<div class="b " style="left:975.4px;top:462.7px;width:13.4px;height:13.4px;background:#fdc23c;border-radius:50%"></div>
<span class="t" style="left:1050.12px;top:463.00px;font-size:16px;color:#191b23;letter-spacing:0.000px;transform:scaleX(1.0475);">1.25</span>
<span class="t" style="left:1114.62px;top:463.00px;font-size:16px;color:#191b23;letter-spacing:0.000px;transform:scaleX(1.0218);">0.48</span>
<svg style="left:1165.2px;top:461.6px" width="16.8" height="14.4" viewBox="0 0 16.8 14.4"><g fill="#a6a8b5"><rect x="0" y="0" width="16.6" height="3.2" rx="0.6"/><rect x="0" y="0" width="2" height="14.2" rx="0.6"/><rect x="14.7" y="0" width="1.9" height="5"/><rect x="0" y="12.3" width="7.2" height="1.9" rx="0.6"/></g><circle cx="11.7" cy="9.5" r="2.95" fill="none" stroke="#a6a8b5" stroke-width="1.9"/><path d="M13.9 11.7 L15.9 13.6" stroke="#a6a8b5" stroke-width="2" stroke-linecap="round"/></svg>
<div class="b " style="left:1192px;top:458.2px;width:1px;height:22.4px;background:#d5d7de"></div>
<span class="t" style="left:1201.32px;top:463.00px;font-size:16px;color:#6c6e79;letter-spacing:0.000px;transform:scaleX(1.0689);">7</span>
<svg style="left:1201.6px;top:478.1px" width="9" height="1" viewBox="0 0 9 1"><path d="M0 0.5 H2 M3.4 0.5 H5.4 M6.8 0.5 H9" stroke="#8a8d99" stroke-width="1"/></svg>
<span class="t" style="left:1271.62px;top:463.00px;font-size:16px;color:#191b23;letter-spacing:0.000px;transform:scaleX(1.0412);">2 weeks</span>
<svg style="left:1338.7px;top:461.3px" width="16.3" height="16.3" viewBox="0 0 16.4 16.4"><path d="M13.6 11.9 A6.6 6.6 0 1 1 13.6 4.7 L14.6 6.1" fill="none" stroke="#006dca" stroke-width="2.3" stroke-linecap="round" stroke-linejoin="round"/><path d="M15.3 1.6 V6.3 H10.4" fill="none" stroke="#006dca" stroke-width="2.3" stroke-linecap="round" stroke-linejoin="round"/></svg>
<div class="b " style="left:261.8px;top:493.0px;width:1116.4px;height:1px;background:#e0e1e9"></div>
</div>
<div role="row">
<div class="b " style="left:284.2px;top:507.1px;width:17.6px;height:18px;background:#fff;border:1px solid #c4c7cf;border-radius:4px"></div>
<svg style="left:319.9px;top:509.0px" width="17.8" height="17.8" viewBox="0 0 17.8 17.8"><circle cx="8.9" cy="8.9" r="7.8" fill="none" stroke="#989aa6" stroke-width="2.1"/><path d="M8.9 5.1 V12.7 M5.1 8.9 H12.7" stroke="#989aa6" stroke-width="2.1" stroke-linecap="round"/></svg>
<span class="t" style="left:341.52px;top:512.00px;font-size:16px;color:#006dca;letter-spacing:0.000px;transform:scaleX(1.0596);">how to edit a live photo</span>
<svg style="left:521.9px;top:513.5999999999999px" width="13.7" height="10" viewBox="0 0 13.7 10"><path d="M1.1 1 L5.6 5 L1.1 9 M8.1 1 L12.6 5 L8.1 9" fill="none" stroke="#a3a6b2" stroke-width="2" stroke-linecap="round" stroke-linejoin="round"/></svg>
<div class="b " style="left:658.5px;top:509.8px;width:17.5px;height:17.3px;background:#c4e5fe;border-radius:4px"></div>
<span class="t" style="left:664.68px;top:511.00px;font-size:13px;color:#006dca;letter-spacing:0.714px;font-weight:700;transform:scaleX(1.1000);">I</span>
<span class="t" style="left:802.62px;top:512.00px;font-size:16px;color:#191b23;letter-spacing:0.000px;transform:scaleX(1.0943);">590</span>
<svg style="left:854.8px;top:493.5px" width="40.1" height="34" viewBox="0 0 40.1 34"><path d="M0.0 27.6 L3.6 25.3 L7.3 25.3 L10.9 23.4 L14.6 23.4 L18.2 25.3 L21.9 19.6 L25.5 13.9 L29.2 16.4 L32.8 19.0 L36.5 21.5 L40.1 21.5 L40.1 33 L0 33 Z" fill="#dbeffe"/><path d="M0.0 27.6 L3.6 25.3 L7.3 25.3 L10.9 23.4 L14.6 23.4 L18.2 25.3 L21.9 19.6 L25.5 13.9 L29.2 16.4 L32.8 19.0 L36.5 21.5 L40.1 21.5" fill="none" stroke="#3fa9f0" stroke-width="1.3" stroke-linejoin="round"/></svg>
<span class="t" style="left:946.62px;top:512.00px;font-size:16px;color:#191b23;letter-spacing:0.000px;transform:scaleX(1.0743);">46</span>
<div class="b " style="left:975.4px;top:511.7px;width:13.4px;height:13.4px;background:#fdc23c;border-radius:50%"></div>
<span class="t" style="left:1050.12px;top:512.00px;font-size:16px;color:#191b23;letter-spacing:0.000px;transform:scaleX(1.0475);">1.02</span>
<span class="t" style="left:1114.62px;top:512.00px;font-size:16px;color:#191b23;letter-spacing:0.000px;transform:scaleX(1.0218);">0.01</span>
<svg style="left:1165.2px;top:510.6px" width="16.8" height="14.4" viewBox="0 0 16.8 14.4"><g fill="#a6a8b5"><rect x="0" y="0" width="16.6" height="3.2" rx="0.6"/><rect x="0" y="0" width="2" height="14.2" rx="0.6"/><rect x="14.7" y="0" width="1.9" height="5"/><rect x="0" y="12.3" width="7.2" height="1.9" rx="0.6"/></g><circle cx="11.7" cy="9.5" r="2.95" fill="none" stroke="#a6a8b5" stroke-width="1.9"/><path d="M13.9 11.7 L15.9 13.6" stroke="#a6a8b5" stroke-width="2" stroke-linecap="round"/></svg>
<div class="b " style="left:1192px;top:507.2px;width:1px;height:22.4px;background:#d5d7de"></div>
<span class="t" style="left:1201.32px;top:512.00px;font-size:16px;color:#6c6e79;letter-spacing:0.000px;transform:scaleX(1.0689);">5</span>
<svg style="left:1201.6px;top:527.1px" width="9" height="1" viewBox="0 0 9 1"><path d="M0 0.5 H2 M3.4 0.5 H5.4 M6.8 0.5 H9" stroke="#8a8d99" stroke-width="1"/></svg>
<span class="t" style="left:1271.62px;top:512.00px;font-size:16px;color:#191b23;letter-spacing:0.000px;transform:scaleX(1.0412);">2 weeks</span>
<svg style="left:1338.7px;top:510.3px" width="16.3" height="16.3" viewBox="0 0 16.4 16.4"><path d="M13.6 11.9 A6.6 6.6 0 1 1 13.6 4.7 L14.6 6.1" fill="none" stroke="#006dca" stroke-width="2.3" stroke-linecap="round" stroke-linejoin="round"/><path d="M15.3 1.6 V6.3 H10.4" fill="none" stroke="#006dca" stroke-width="2.3" stroke-linecap="round" stroke-linejoin="round"/></svg>
<div class="b " style="left:261.8px;top:542.0px;width:1116.4px;height:1px;background:#e0e1e9"></div>
</div>
<div role="row">
<div class="b " style="left:284.2px;top:556.1px;width:17.6px;height:18px;background:#fff;border:1px solid #c4c7cf;border-radius:4px"></div>
<svg style="left:319.9px;top:558.0px" width="17.8" height="17.8" viewBox="0 0 17.8 17.8"><circle cx="8.9" cy="8.9" r="7.8" fill="none" stroke="#989aa6" stroke-width="2.1"/><path d="M8.9 5.1 V12.7 M5.1 8.9 H12.7" stroke="#989aa6" stroke-width="2.1" stroke-linecap="round"/></svg>
<span class="t" style="left:341.52px;top:561.00px;font-size:16px;color:#006dca;letter-spacing:0.000px;transform:scaleX(1.0618);">how to edit background of photo on</span>
<span class="t" style="left:341.52px;top:583.00px;font-size:16px;color:#006dca;letter-spacing:0.000px;transform:scaleX(1.0544);">iphone free</span>
<svg style="left:432.9px;top:585.0999999999999px" width="13.7" height="10" viewBox="0 0 13.7 10"><path d="M1.1 1 L5.6 5 L1.1 9 M8.1 1 L12.6 5 L8.1 9" fill="none" stroke="#a3a6b2" stroke-width="2" stroke-linecap="round" stroke-linejoin="round"/></svg>
<div class="b " style="left:658.5px;top:558.8px;width:17.5px;height:17.3px;background:#c4e5fe;border-radius:4px"></div>
<span class="t" style="left:664.68px;top:560.00px;font-size:13px;color:#006dca;letter-spacing:0.714px;font-weight:700;transform:scaleX(1.1000);">I</span>
<span class="t" style="left:802.62px;top:561.00px;font-size:16px;color:#191b23;letter-spacing:0.000px;transform:scaleX(1.0943);">390</span>
<svg style="left:854.8px;top:542.5px" width="40.1" height="34" viewBox="0 0 40.1 34"><path d="M0.0 26.0 L3.6 26.0 L7.3 26.0 L10.9 26.0 L14.6 27.2 L18.2 27.2 L21.9 24.4 L25.5 22.5 L29.2 22.5 L32.8 22.5 L36.5 24.4 L40.1 26.9 L40.1 33 L0 33 Z" fill="#dbeffe"/><path d="M0.0 26.0 L3.6 26.0 L7.3 26.0 L10.9 26.0 L14.6 27.2 L18.2 27.2 L21.9 24.4 L25.5 22.5 L29.2 22.5 L32.8 22.5 L36.5 24.4 L40.1 26.9" fill="none" stroke="#3fa9f0" stroke-width="1.3" stroke-linejoin="round"/></svg>
<span class="t" style="left:946.62px;top:561.00px;font-size:16px;color:#191b23;letter-spacing:0.000px;transform:scaleX(1.0743);">41</span>
<div class="b " style="left:975.4px;top:560.7px;width:13.4px;height:13.4px;background:#fdc23c;border-radius:50%"></div>
<span class="t" style="left:1050.12px;top:561.00px;font-size:16px;color:#191b23;letter-spacing:0.000px;transform:scaleX(1.0475);">0.81</span>
<span class="t" style="left:1114.62px;top:561.00px;font-size:16px;color:#191b23;letter-spacing:0.000px;transform:scaleX(1.0218);">0.44</span>
<svg style="left:1165.2px;top:559.6px" width="16.8" height="14.4" viewBox="0 0 16.8 14.4"><g fill="#a6a8b5"><rect x="0" y="0" width="16.6" height="3.2" rx="0.6"/><rect x="0" y="0" width="2" height="14.2" rx="0.6"/><rect x="14.7" y="0" width="1.9" height="5"/><rect x="0" y="12.3" width="7.2" height="1.9" rx="0.6"/></g><circle cx="11.7" cy="9.5" r="2.95" fill="none" stroke="#a6a8b5" stroke-width="1.9"/><path d="M13.9 11.7 L15.9 13.6" stroke="#a6a8b5" stroke-width="2" stroke-linecap="round"/></svg>
<div class="b " style="left:1192px;top:556.2px;width:1px;height:22.4px;background:#d5d7de"></div>
<span class="t" style="left:1201.32px;top:561.00px;font-size:16px;color:#6c6e79;letter-spacing:0.000px;transform:scaleX(1.0689);">6</span>
<svg style="left:1201.6px;top:576.1px" width="9" height="1" viewBox="0 0 9 1"><path d="M0 0.5 H2 M3.4 0.5 H5.4 M6.8 0.5 H9" stroke="#8a8d99" stroke-width="1"/></svg>
<span class="t" style="left:1271.62px;top:561.00px;font-size:16px;color:#191b23;letter-spacing:0.000px;transform:scaleX(1.0412);">2 weeks</span>
<svg style="left:1338.7px;top:559.3px" width="16.3" height="16.3" viewBox="0 0 16.4 16.4"><path d="M13.6 11.9 A6.6 6.6 0 1 1 13.6 4.7 L14.6 6.1" fill="none" stroke="#006dca" stroke-width="2.3" stroke-linecap="round" stroke-linejoin="round"/><path d="M15.3 1.6 V6.3 H10.4" fill="none" stroke="#006dca" stroke-width="2.3" stroke-linecap="round" stroke-linejoin="round"/></svg>
<div class="b " style="left:261.8px;top:613.5px;width:1116.4px;height:1px;background:#e0e1e9"></div>
</div>
<div role="row">
<div class="b " style="left:284.2px;top:627.6px;width:17.6px;height:18px;background:#fff;border:1px solid #c4c7cf;border-radius:4px"></div>
<svg style="left:319.9px;top:629.5px" width="17.8" height="17.8" viewBox="0 0 17.8 17.8"><circle cx="8.9" cy="8.9" r="7.8" fill="none" stroke="#989aa6" stroke-width="2.1"/><path d="M8.9 5.1 V12.7 M5.1 8.9 H12.7" stroke="#989aa6" stroke-width="2.1" stroke-linecap="round"/></svg>
<span class="t" style="left:341.52px;top:632.00px;font-size:16px;color:#006dca;letter-spacing:0.000px;transform:scaleX(1.0572);">can you edit the order of photos on</span>
<span class="t" style="left:341.52px;top:655.00px;font-size:16px;color:#006dca;letter-spacing:0.000px;transform:scaleX(1.0570);">instagram post</span>
<svg style="left:459.4px;top:656.5999999999999px" width="13.7" height="10" viewBox="0 0 13.7 10"><path d="M1.1 1 L5.6 5 L1.1 9 M8.1 1 L12.6 5 L8.1 9" fill="none" stroke="#a3a6b2" stroke-width="2" stroke-linecap="round" stroke-linejoin="round"/></svg>
<div class="b " style="left:658.5px;top:630.3px;width:17.5px;height:17.3px;background:#c4e5fe;border-radius:4px"></div>
<span class="t" style="left:664.68px;top:632.00px;font-size:13px;color:#006dca;letter-spacing:0.714px;font-weight:700;transform:scaleX(1.1000);">I</span>
<span class="t" style="left:802.62px;top:632.00px;font-size:16px;color:#191b23;letter-spacing:0.000px;transform:scaleX(1.0943);">320</span>
<svg style="left:854.8px;top:614px" width="40.1" height="34" viewBox="0 0 40.1 34"><path d="M0.0 19.2 L3.6 17.0 L7.3 17.0 L10.9 13.5 L14.6 17.0 L18.2 17.0 L21.9 13.5 L25.5 17.0 L29.2 13.5 L32.8 17.0 L36.5 17.0 L40.1 19.5 L40.1 33 L0 33 Z" fill="#dbeffe"/><path d="M0.0 19.2 L3.6 17.0 L7.3 17.0 L10.9 13.5 L14.6 17.0 L18.2 17.0 L21.9 13.5 L25.5 17.0 L29.2 13.5 L32.8 17.0 L36.5 17.0 L40.1 19.5" fill="none" stroke="#3fa9f0" stroke-width="1.3" stroke-linejoin="round"/></svg>
<span class="t" style="left:946.62px;top:632.00px;font-size:16px;color:#191b23;letter-spacing:0.000px;transform:scaleX(1.0743);">42</span>
<div class="b " style="left:975.4px;top:632.2px;width:13.4px;height:13.4px;background:#fdc23c;border-radius:50%"></div>
<span class="t" style="left:1050.12px;top:632.00px;font-size:16px;color:#191b23;letter-spacing:0.000px;transform:scaleX(1.0475);">0.00</span>
<span class="t" style="left:1114.62px;top:632.00px;font-size:16px;color:#191b23;letter-spacing:0.000px;transform:scaleX(1.0218);">0.00</span>
<svg style="left:1165.2px;top:631.1px" width="16.8" height="14.4" viewBox="0 0 16.8 14.4"><g fill="#a6a8b5"><rect x="0" y="0" width="16.6" height="3.2" rx="0.6"/><rect x="0" y="0" width="2" height="14.2" rx="0.6"/><rect x="14.7" y="0" width="1.9" height="5"/><rect x="0" y="12.3" width="7.2" height="1.9" rx="0.6"/></g><circle cx="11.7" cy="9.5" r="2.95" fill="none" stroke="#a6a8b5" stroke-width="1.9"/><path d="M13.9 11.7 L15.9 13.6" stroke="#a6a8b5" stroke-width="2" stroke-linecap="round"/></svg>
<div class="b " style="left:1192px;top:627.7px;width:1px;height:22.4px;background:#d5d7de"></div>
<span class="t" style="left:1201.32px;top:632.00px;font-size:16px;color:#6c6e79;letter-spacing:0.000px;transform:scaleX(1.0689);">7</span>
<svg style="left:1201.6px;top:647.6px" width="9" height="1" viewBox="0 0 9 1"><path d="M0 0.5 H2 M3.4 0.5 H5.4 M6.8 0.5 H9" stroke="#8a8d99" stroke-width="1"/></svg>
<span class="t" style="left:1258.12px;top:632.00px;font-size:16px;color:#191b23;letter-spacing:0.000px;transform:scaleX(1.0357);">Last week</span>
<svg style="left:1338.7px;top:630.8px" width="16.3" height="16.3" viewBox="0 0 16.4 16.4"><path d="M13.6 11.9 A6.6 6.6 0 1 1 13.6 4.7 L14.6 6.1" fill="none" stroke="#006dca" stroke-width="2.3" stroke-linecap="round" stroke-linejoin="round"/><path d="M15.3 1.6 V6.3 H10.4" fill="none" stroke="#006dca" stroke-width="2.3" stroke-linecap="round" stroke-linejoin="round"/></svg>
<div class="b " style="left:261.8px;top:685.0px;width:1116.4px;height:1px;background:#e0e1e9"></div>
</div>
<div role="row">
<div class="b " style="left:284.2px;top:699.1px;width:17.6px;height:18px;background:#fff;border:1px solid #c4c7cf;border-radius:4px"></div>
<svg style="left:319.9px;top:701.0px" width="17.8" height="17.8" viewBox="0 0 17.8 17.8"><circle cx="8.9" cy="8.9" r="7.8" fill="none" stroke="#989aa6" stroke-width="2.1"/><path d="M8.9 5.1 V12.7 M5.1 8.9 H12.7" stroke="#989aa6" stroke-width="2.1" stroke-linecap="round"/></svg>
<span class="t" style="left:341.52px;top:704.00px;font-size:16px;color:#006dca;letter-spacing:0.000px;transform:scaleX(1.0489);">how do you edit someone out of a</span>
<span class="t" style="left:341.52px;top:726.00px;font-size:16px;color:#006dca;letter-spacing:0.000px;transform:scaleX(1.0667);">photo</span>
<svg style="left:391.2px;top:728.0999999999999px" width="13.7" height="10" viewBox="0 0 13.7 10"><path d="M1.1 1 L5.6 5 L1.1 9 M8.1 1 L12.6 5 L8.1 9" fill="none" stroke="#a3a6b2" stroke-width="2" stroke-linecap="round" stroke-linejoin="round"/></svg>
<div class="b " style="left:658.5px;top:701.8px;width:17.5px;height:17.3px;background:#c4e5fe;border-radius:4px"></div>
<span class="t" style="left:664.68px;top:703.00px;font-size:13px;color:#006dca;letter-spacing:0.714px;font-weight:700;transform:scaleX(1.1000);">I</span>
<span class="t" style="left:802.62px;top:704.00px;font-size:16px;color:#191b23;letter-spacing:0.000px;transform:scaleX(1.0943);">320</span>
<svg style="left:854.8px;top:685.5px" width="40.1" height="34" viewBox="0 0 40.1 34"><path d="M0.0 31.8 L3.6 31.3 L7.3 31.3 L10.9 31.1 L14.6 31.6 L18.2 31.6 L21.9 13.8 L25.5 15.6 L29.2 30.4 L32.8 15.6 L36.5 30.4 L40.1 21.3 L40.1 33 L0 33 Z" fill="#dbeffe"/><path d="M0.0 31.8 L3.6 31.3 L7.3 31.3 L10.9 31.1 L14.6 31.6 L18.2 31.6 L21.9 13.8 L25.5 15.6 L29.2 30.4 L32.8 15.6 L36.5 30.4 L40.1 21.3" fill="none" stroke="#3fa9f0" stroke-width="1.3" stroke-linejoin="round"/></svg>
<span class="t" style="left:946.62px;top:704.00px;font-size:16px;color:#191b23;letter-spacing:0.000px;transform:scaleX(1.0743);">40</span>
<div class="b " style="left:975.4px;top:703.7px;width:13.4px;height:13.4px;background:#fdc23c;border-radius:50%"></div>
<span class="t" style="left:1050.12px;top:704.00px;font-size:16px;color:#191b23;letter-spacing:0.000px;transform:scaleX(1.0475);">1.25</span>
<span class="t" style="left:1114.62px;top:704.00px;font-size:16px;color:#191b23;letter-spacing:0.000px;transform:scaleX(1.0218);">0.48</span>
<svg style="left:1165.2px;top:702.6px" width="16.8" height="14.4" viewBox="0 0 16.8 14.4"><g fill="#a6a8b5"><rect x="0" y="0" width="16.6" height="3.2" rx="0.6"/><rect x="0" y="0" width="2" height="14.2" rx="0.6"/><rect x="14.7" y="0" width="1.9" height="5"/><rect x="0" y="12.3" width="7.2" height="1.9" rx="0.6"/></g><circle cx="11.7" cy="9.5" r="2.95" fill="none" stroke="#a6a8b5" stroke-width="1.9"/><path d="M13.9 11.7 L15.9 13.6" stroke="#a6a8b5" stroke-width="2" stroke-linecap="round"/></svg>
<div class="b " style="left:1192px;top:699.2px;width:1px;height:22.4px;background:#d5d7de"></div>
<span class="t" style="left:1201.32px;top:704.00px;font-size:16px;color:#6c6e79;letter-spacing:0.000px;transform:scaleX(1.0689);">6</span>
<svg style="left:1201.6px;top:719.1px" width="9" height="1" viewBox="0 0 9 1"><path d="M0 0.5 H2 M3.4 0.5 H5.4 M6.8 0.5 H9" stroke="#8a8d99" stroke-width="1"/></svg>
<span class="t" style="left:1258.12px;top:704.00px;font-size:16px;color:#191b23;letter-spacing:0.000px;transform:scaleX(1.0357);">Last week</span>
<svg style="left:1338.7px;top:702.3px" width="16.3" height="16.3" viewBox="0 0 16.4 16.4"><path d="M13.6 11.9 A6.6 6.6 0 1 1 13.6 4.7 L14.6 6.1" fill="none" stroke="#006dca" stroke-width="2.3" stroke-linecap="round" stroke-linejoin="round"/><path d="M15.3 1.6 V6.3 H10.4" fill="none" stroke="#006dca" stroke-width="2.3" stroke-linecap="round" stroke-linejoin="round"/></svg>
<div class="b " style="left:261.8px;top:756.5px;width:1116.4px;height:1px;background:#e0e1e9"></div>
</div>
<div role="row">
<div class="b " style="left:284.2px;top:770.6px;width:17.6px;height:18px;background:#fff;border:1px solid #c4c7cf;border-radius:4px"></div>
<svg style="left:319.9px;top:772.5px" width="17.8" height="17.8" viewBox="0 0 17.8 17.8"><circle cx="8.9" cy="8.9" r="7.8" fill="none" stroke="#989aa6" stroke-width="2.1"/><path d="M8.9 5.1 V12.7 M5.1 8.9 H12.7" stroke="#989aa6" stroke-width="2.1" stroke-linecap="round"/></svg>
<span class="t" style="left:341.52px;top:775.00px;font-size:16px;color:#006dca;letter-spacing:0.000px;transform:scaleX(1.0638);">how to edit live photo</span>
<svg style="left:508.4px;top:777.0999999999999px" width="13.7" height="10" viewBox="0 0 13.7 10"><path d="M1.1 1 L5.6 5 L1.1 9 M8.1 1 L12.6 5 L8.1 9" fill="none" stroke="#a3a6b2" stroke-width="2" stroke-linecap="round" stroke-linejoin="round"/></svg>
<div class="b " style="left:658.5px;top:773.3px;width:17.5px;height:17.3px;background:#c4e5fe;border-radius:4px"></div>
<span class="t" style="left:664.68px;top:775.00px;font-size:13px;color:#006dca;letter-spacing:0.714px;font-weight:700;transform:scaleX(1.1000);">I</span>
<span class="t" style="left:802.62px;top:775.00px;font-size:16px;color:#191b23;letter-spacing:0.000px;transform:scaleX(1.0943);">320</span>
<svg style="left:854.8px;top:757px" width="40.1" height="34" viewBox="0 0 40.1 34"><path d="M0.0 23.8 L3.6 22.0 L7.3 21.6 L10.9 17.0 L14.6 19.3 L18.2 22.0 L21.9 21.6 L25.5 13.6 L29.2 19.3 L32.8 13.6 L36.5 19.3 L40.1 16.6 L40.1 33 L0 33 Z" fill="#dbeffe"/><path d="M0.0 23.8 L3.6 22.0 L7.3 21.6 L10.9 17.0 L14.6 19.3 L18.2 22.0 L21.9 21.6 L25.5 13.6 L29.2 19.3 L32.8 13.6 L36.5 19.3 L40.1 16.6" fill="none" stroke="#3fa9f0" stroke-width="1.3" stroke-linejoin="round"/></svg>
<span class="t" style="left:946.62px;top:775.00px;font-size:16px;color:#191b23;letter-spacing:0.000px;transform:scaleX(1.0743);">44</span>
<div class="b " style="left:975.4px;top:775.2px;width:13.4px;height:13.4px;background:#fdc23c;border-radius:50%"></div>
<span class="t" style="left:1050.12px;top:775.00px;font-size:16px;color:#191b23;letter-spacing:0.000px;transform:scaleX(1.0475);">1.02</span>
<span class="t" style="left:1114.62px;top:775.00px;font-size:16px;color:#191b23;letter-spacing:0.000px;transform:scaleX(1.0218);">0.02</span>
<svg style="left:1165.2px;top:774.1px" width="16.8" height="14.4" viewBox="0 0 16.8 14.4"><g fill="#a6a8b5"><rect x="0" y="0" width="16.6" height="3.2" rx="0.6"/><rect x="0" y="0" width="2" height="14.2" rx="0.6"/><rect x="14.7" y="0" width="1.9" height="5"/><rect x="0" y="12.3" width="7.2" height="1.9" rx="0.6"/></g><circle cx="11.7" cy="9.5" r="2.95" fill="none" stroke="#a6a8b5" stroke-width="1.9"/><path d="M13.9 11.7 L15.9 13.6" stroke="#a6a8b5" stroke-width="2" stroke-linecap="round"/></svg>
<div class="b " style="left:1192px;top:770.7px;width:1px;height:22.4px;background:#d5d7de"></div>
<span class="t" style="left:1201.32px;top:775.00px;font-size:16px;color:#6c6e79;letter-spacing:0.000px;transform:scaleX(1.0689);">4</span>
<svg style="left:1201.6px;top:790.6px" width="9" height="1" viewBox="0 0 9 1"><path d="M0 0.5 H2 M3.4 0.5 H5.4 M6.8 0.5 H9" stroke="#8a8d99" stroke-width="1"/></svg>
<span class="t" style="left:1271.62px;top:775.00px;font-size:16px;color:#191b23;letter-spacing:0.000px;transform:scaleX(1.0412);">4 weeks</span>
<svg style="left:1338.7px;top:773.8px" width="16.3" height="16.3" viewBox="0 0 16.4 16.4"><path d="M13.6 11.9 A6.6 6.6 0 1 1 13.6 4.7 L14.6 6.1" fill="none" stroke="#006dca" stroke-width="2.3" stroke-linecap="round" stroke-linejoin="round"/><path d="M15.3 1.6 V6.3 H10.4" fill="none" stroke="#006dca" stroke-width="2.3" stroke-linecap="round" stroke-linejoin="round"/></svg>
<div class="b " style="left:261.8px;top:805.5px;width:1116.4px;height:1px;background:#e0e1e9"></div>
</div>
<svg style="left:0;top:0" width="1400" height="790" viewBox="0 0 1400 790"><path d="M634.6 800 V252.9 H708.1 V800" fill="none" stroke="#b77ffb" stroke-width="6.1"/></svg>
</main>
<div class="b " style="left:0px;top:757px;width:1400px;height:33px;background:linear-gradient(to bottom, rgba(255,255,255,0) 0%, rgba(255,255,255,0.58) 50%, #fff 92%, #fff 100%)"></div>
</div>
</body>
</html>
